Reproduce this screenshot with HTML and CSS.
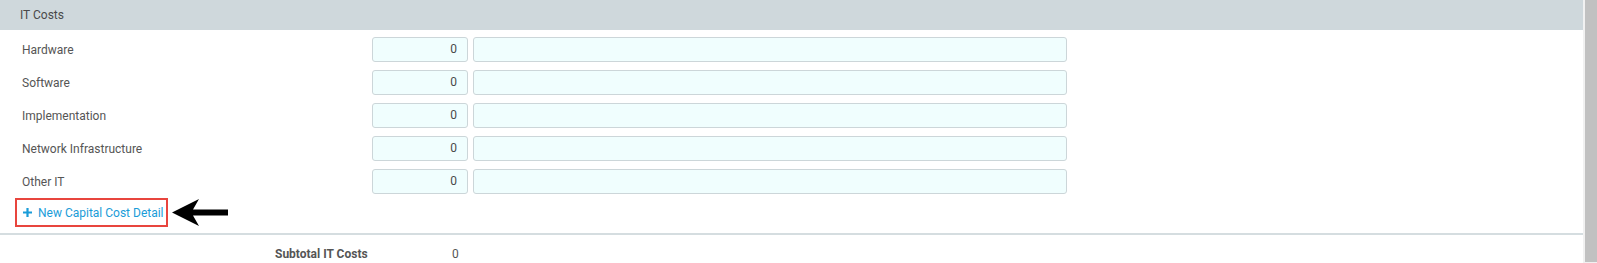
FILE: index.html
```html
<!DOCTYPE html>
<html>
<head>
<meta charset="utf-8">
<link rel="stylesheet" href="styles.css">
</head>
<body>
<div class="page">
  <div class="content">
    <div class="section-header">IT Costs</div>
    <div class="rows">
      <div class="row"><span class="label">Hardware</span><span class="num">0</span><span class="text"></span></div>
      <div class="row"><span class="label">Software</span><span class="num">0</span><span class="text"></span></div>
      <div class="row"><span class="label">Implementation</span><span class="num">0</span><span class="text"></span></div>
      <div class="row"><span class="label">Network Infrastructure</span><span class="num">0</span><span class="text"></span></div>
      <div class="row"><span class="label">Other IT</span><span class="num">0</span><span class="text"></span></div>
    </div>
    <div class="add-row">
      <a class="add-btn"><svg class="plus" width="9" height="9" viewBox="0 0 9 9"><path d="M3.4 0h2.2v3.4H9v2.2H5.6V9H3.4V5.6H0V3.4h3.4z" fill="#1a9cd8"/></svg>New Capital Cost Detail</a>
      <svg class="arrow" width="57" height="27" viewBox="0 0 57 27"><path d="M0 13.5 L27 0 L21 10.5 H56 V16.5 H21 L27 27 Z" fill="#000"/></svg>
    </div>
    <div class="subtotal">
      <span class="sub-label">Subtotal IT Costs</span>
      <span class="sub-val">0</span>
    </div>
  </div>
  <div class="scrollbar"><div class="thumb"></div></div>
</div>
</body>
</html>
```
FILE: styles.css
```css
html, body {
  margin: 0;
  padding: 0;
  background: #fff;
}
body {
  font-family: Roboto, "Liberation Sans", sans-serif;
  font-size: 12px;
  color: #555;
  overflow: hidden;
}
.page {
  display: flex;
  width: 1597px;
  height: 263px;
}
.content {
  width: 1583px;
  flex: none;
}
.section-header {
  height: 30px;
  background: #cfd8dc;
  color: #4a4a4a;
  line-height: 30px;
  padding-left: 20px;
  font-size: 12px;
}
.rows {
  padding-top: 7px;
  display: flex;
  flex-direction: column;
  gap: 8px;
}
.row {
  display: flex;
  align-items: center;
  height: 25px;
}
.label {
  width: 350px;
  padding-left: 22px;
  color: #555;
}
.num, .text {
  box-sizing: border-box;
  height: 25px;
  background: #f0fefe;
  border: 1px solid #ccd6d9;
  border-radius: 3px;
}
.num {
  width: 96px;
  text-align: right;
  padding-right: 10px;
  line-height: 23px;
  color: #4a4a4a;
}
.text {
  width: 594px;
  margin-left: 5px;
}
.add-row {
  display: flex;
  align-items: center;
  margin-top: 4px;
  padding-left: 15px;
  height: 29px;
}
.add-btn {
  box-sizing: border-box;
  height: 29px;
  width: 153px;
  border: 2px solid #e8453e;
  display: flex;
  align-items: center;
  padding-left: 6px;
  color: #1a9cd8;
  font-size: 12px;
}
.plus {
  margin-right: 6px;
}
.arrow {
  margin-left: 4px;
}
.subtotal {
  margin-top: 6px;
  border-top: 2px solid #d5dde0;
  height: 30px;
  display: flex;
  align-items: center;
  padding-top: 9px;
  box-sizing: border-box;
}
.sub-label {
  margin-left: 275px;
  font-weight: bold;
  color: #555;
  width: 177px;
}
.sub-val {
  color: #555;
}
.scrollbar {
  flex: none;
  width: 14px;
  height: 263px;
  background: #f1f1f1;
  display: flex;
  justify-content: flex-end;
}
.thumb {
  width: 12px;
  height: 262px;
  background: #c1c1c1;
}
```
